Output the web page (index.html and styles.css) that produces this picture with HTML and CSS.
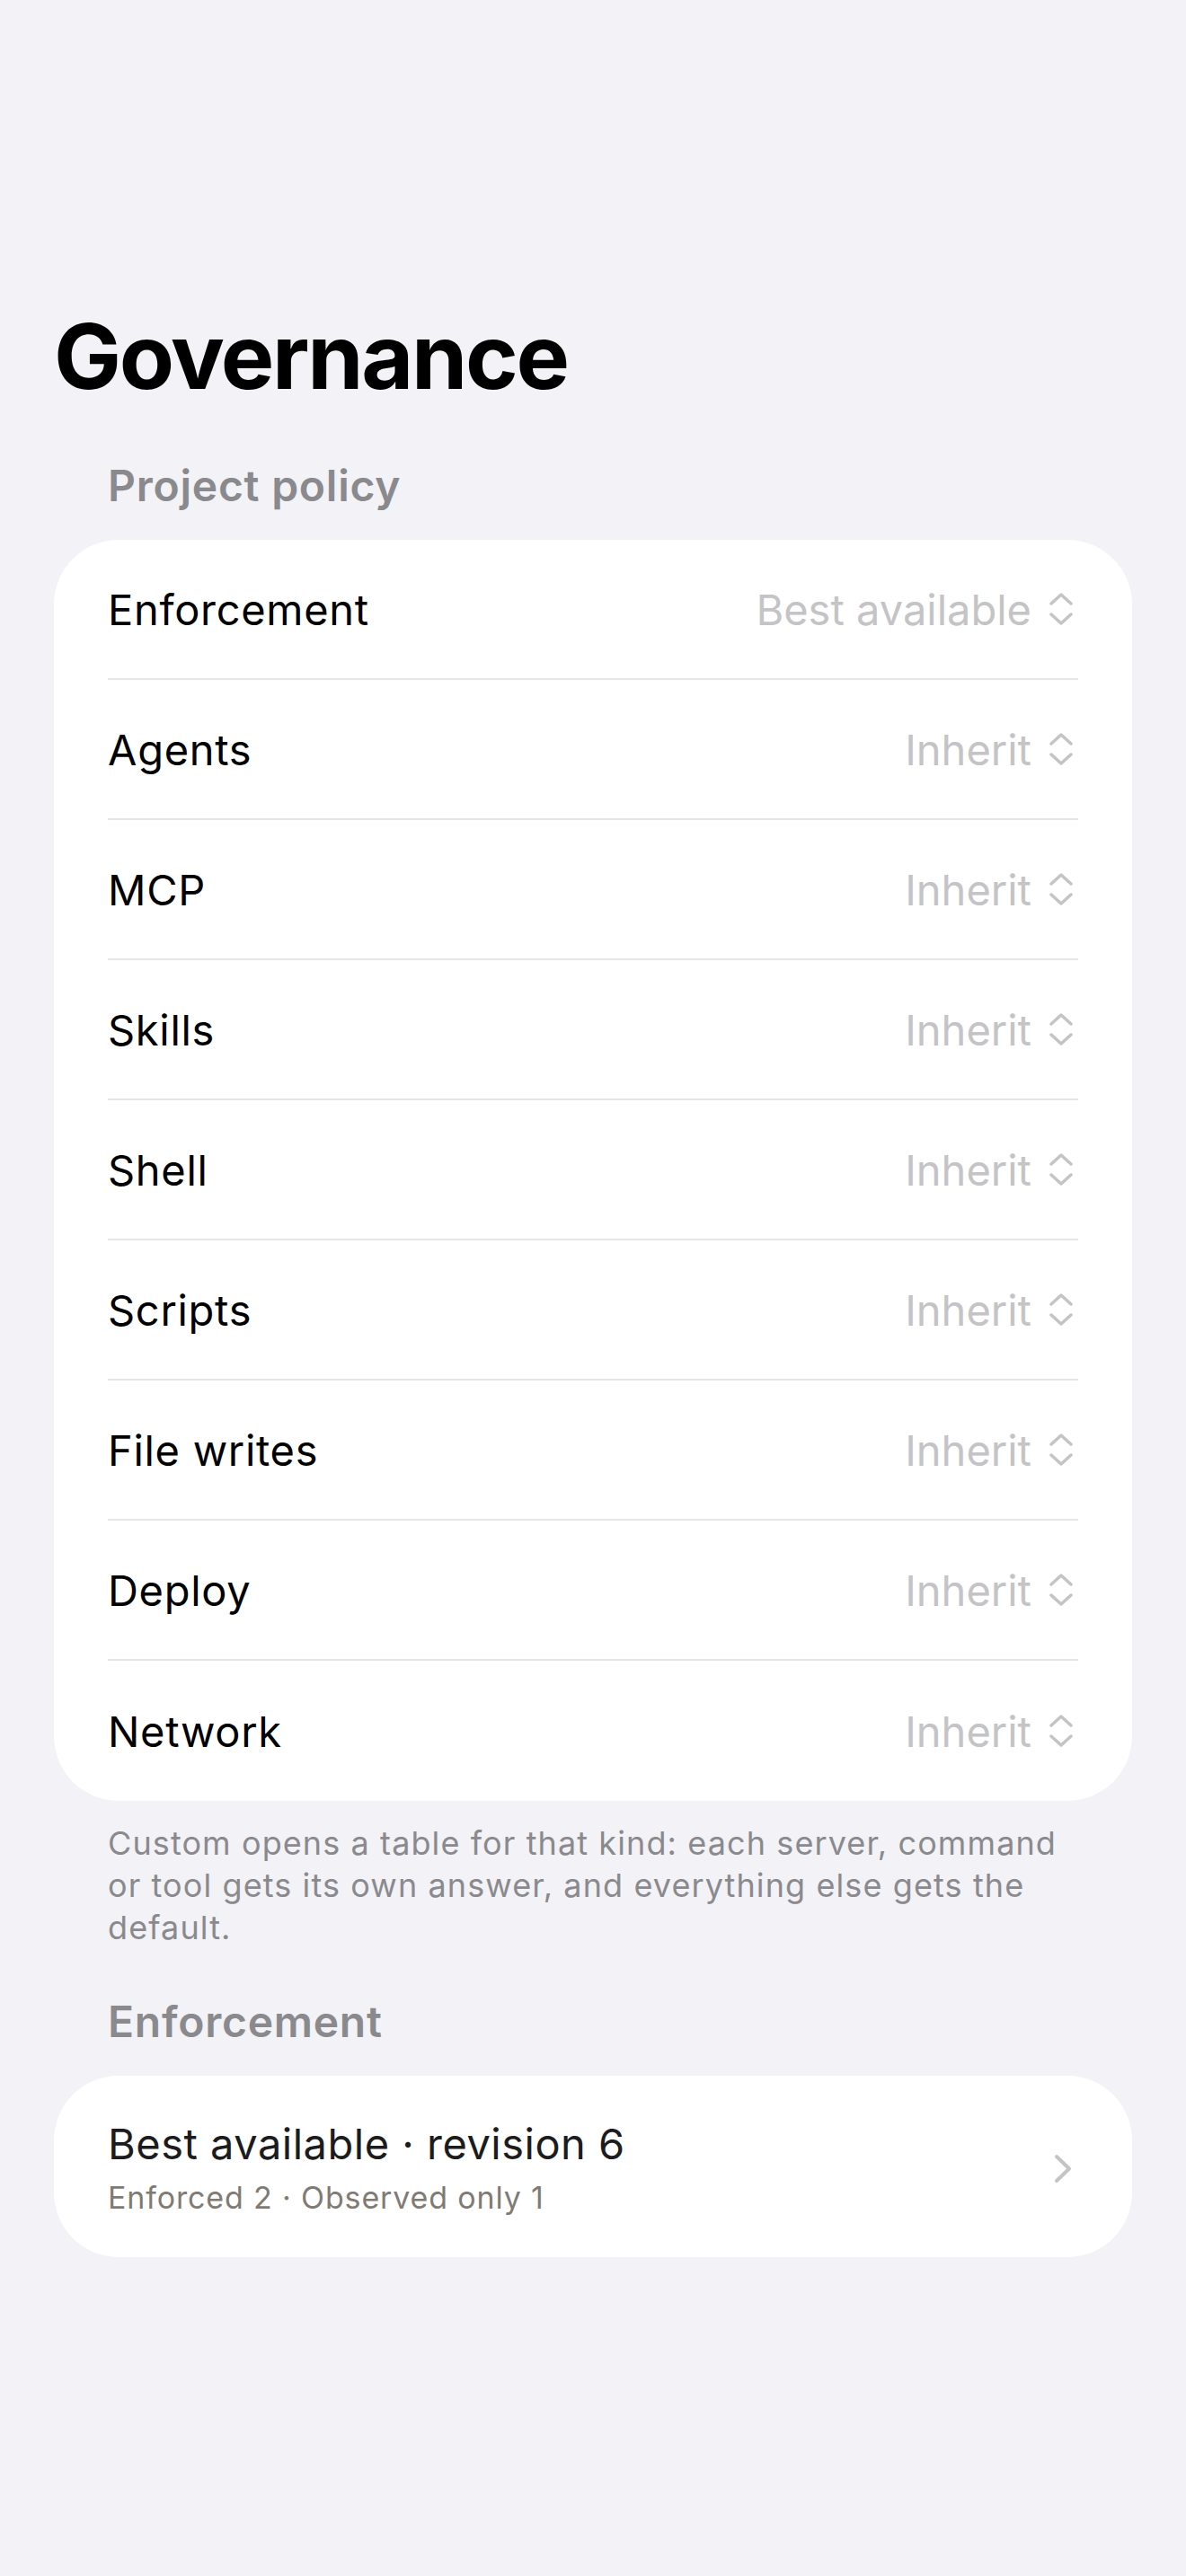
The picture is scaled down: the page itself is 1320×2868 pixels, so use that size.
FILE: index.html
```html
<!DOCTYPE html>
<html lang="en">
<head>
    <meta charset="UTF-8">
    <meta name="viewport" content="width=device-width, initial-scale=1.0">
    <title>Governance</title>
    <link rel="stylesheet" href="styles.css">
</head>
<body>
    <main class="page">
        <h1 class="title">Governance</h1>

        <h2 class="section-header">Project policy</h2>
        <div class="card">
            <div class="row">
                <span class="label">Enforcement</span>
                <span class="value">Best available
                    <svg class="updown" width="26" height="36" viewBox="0 0 26 36"><path d="M2 12 L13 2 L24 12 M2 24 L13 34 L24 24"/></svg>
                </span>
            </div>
            <div class="row">
                <span class="label">Agents</span>
                <span class="value">Inherit
                    <svg class="updown" width="26" height="36" viewBox="0 0 26 36"><path d="M2 12 L13 2 L24 12 M2 24 L13 34 L24 24"/></svg>
                </span>
            </div>
            <div class="row">
                <span class="label">MCP</span>
                <span class="value">Inherit
                    <svg class="updown" width="26" height="36" viewBox="0 0 26 36"><path d="M2 12 L13 2 L24 12 M2 24 L13 34 L24 24"/></svg>
                </span>
            </div>
            <div class="row">
                <span class="label">Skills</span>
                <span class="value">Inherit
                    <svg class="updown" width="26" height="36" viewBox="0 0 26 36"><path d="M2 12 L13 2 L24 12 M2 24 L13 34 L24 24"/></svg>
                </span>
            </div>
            <div class="row">
                <span class="label">Shell</span>
                <span class="value">Inherit
                    <svg class="updown" width="26" height="36" viewBox="0 0 26 36"><path d="M2 12 L13 2 L24 12 M2 24 L13 34 L24 24"/></svg>
                </span>
            </div>
            <div class="row">
                <span class="label">Scripts</span>
                <span class="value">Inherit
                    <svg class="updown" width="26" height="36" viewBox="0 0 26 36"><path d="M2 12 L13 2 L24 12 M2 24 L13 34 L24 24"/></svg>
                </span>
            </div>
            <div class="row">
                <span class="label">File writes</span>
                <span class="value">Inherit
                    <svg class="updown" width="26" height="36" viewBox="0 0 26 36"><path d="M2 12 L13 2 L24 12 M2 24 L13 34 L24 24"/></svg>
                </span>
            </div>
            <div class="row">
                <span class="label">Deploy</span>
                <span class="value">Inherit
                    <svg class="updown" width="26" height="36" viewBox="0 0 26 36"><path d="M2 12 L13 2 L24 12 M2 24 L13 34 L24 24"/></svg>
                </span>
            </div>
            <div class="row">
                <span class="label">Network</span>
                <span class="value">Inherit
                    <svg class="updown" width="26" height="36" viewBox="0 0 26 36"><path d="M2 12 L13 2 L24 12 M2 24 L13 34 L24 24"/></svg>
                </span>
            </div>
        </div>
        <p class="footnote">Custom opens a table for that kind: each server, command or tool gets its own answer, and everything else gets the default.</p>

        <h2 class="section-header">Enforcement</h2>
        <div class="card">
            <div class="link-row">
                <div class="link-text">
                    <div class="link-title">Best available · revision 6</div>
                    <div class="link-sub">Enforced 2 · Observed only 1</div>
                </div>
                <svg class="chevron" width="20" height="33" viewBox="0 0 20 33"><path d="M3 3 L17 16.5 L3 30"/></svg>
            </div>
        </div>
    </main>
</body>
</html>
```

FILE: styles.css
```css
body {
    font-family: Inter, "Noto Sans", sans-serif;
    margin: 0;
    padding: 0;
    background-color: #f2f2f7;
    color: #000;
}
.page {
    padding: 337px 60px 200px;
}
.title {
    margin: 0;
    font-size: 100px;
    line-height: 120px;
    font-weight: 700;
    letter-spacing: -2.3px;
}
.section-header {
    margin: 55px 0 0;
    padding: 0 60px;
    font-size: 48px;
    line-height: 58px;
    font-weight: 600;
    letter-spacing: 0.75px;
    color: #8a8a8e;
}
.card {
    background: #fff;
    border-radius: 72px;
    margin-top: 31px;
    padding: 0 60px;
}
.row {
    display: flex;
    align-items: center;
    justify-content: space-between;
    box-sizing: border-box;
    height: 156px;
    border-bottom: 2px solid #e6e6e9;
    font-size: 47px;
}
.row:last-child {
    border-bottom: none;
}
.label {
    letter-spacing: 0.7px;
}
.value {
    display: flex;
    align-items: center;
    gap: 20px;
    margin-right: 6px;
    color: #c4c4c7;
}
.updown path,
.chevron path {
    fill: none;
    stroke: #c4c4c7;
    stroke-linecap: round;
    stroke-linejoin: round;
}
.updown path {
    stroke-width: 3.5;
}
.chevron path {
    stroke-width: 4;
}
.footnote {
    margin: 24px 0 0;
    padding: 0 60px;
    font-size: 36px;
    line-height: 47px;
    letter-spacing: 1.1px;
    color: #8a8a8e;
}
.footnote + .section-header {
    margin-top: 52px;
}
.link-row {
    display: flex;
    align-items: center;
    justify-content: space-between;
    padding: 48px 0 44px;
}
.link-title {
    font-size: 47px;
    line-height: 56px;
    letter-spacing: 0.5px;
    color: #1c1c1e;
}
.link-sub {
    margin-top: 10px;
    font-size: 34px;
    line-height: 44px;
    letter-spacing: 0.85px;
    color: #7f7b74;
}
.chevron {
    margin-right: 7px;
}
```
